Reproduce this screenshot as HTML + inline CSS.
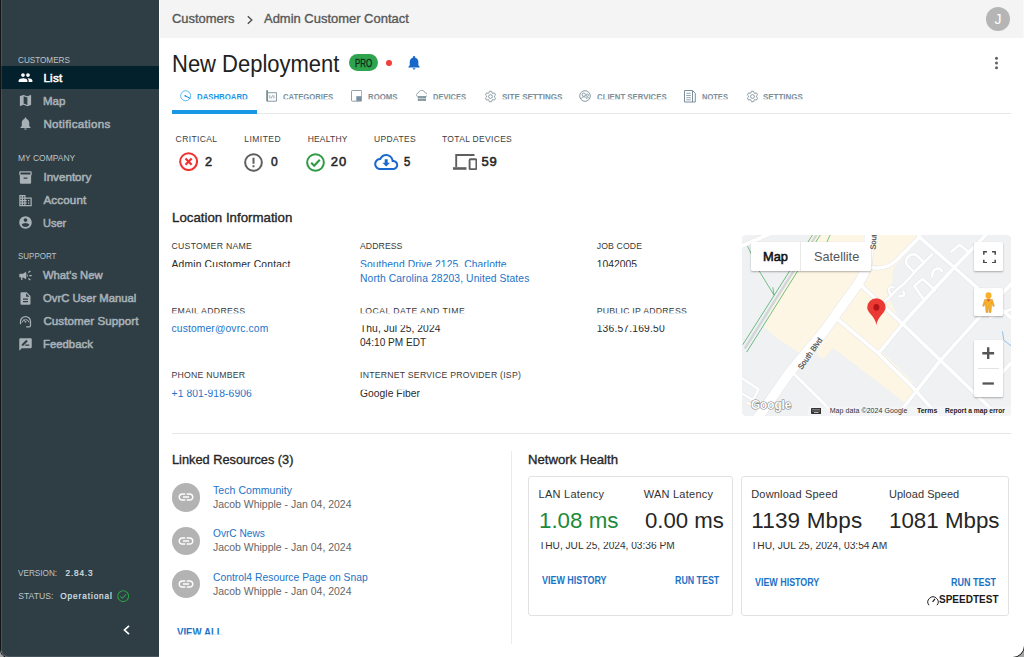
<!DOCTYPE html>
<html lang="en">
<head>
<meta charset="utf-8">
<title>OvrC - New Deployment</title>
<style>
*{box-sizing:border-box;margin:0;padding:0}
html,body{width:1024px;height:657px;overflow:hidden;background:#a2a2a2;font-family:"Liberation Sans",sans-serif;}
#win{position:absolute;left:0;top:-20px;width:1025px;height:678px;background:#fff;border:1px solid #121416;border-radius:9px 9px 12.500px 8px;overflow:hidden;}
#win:after{content:"";position:absolute;left:0;top:0;right:0;bottom:0;border-radius:8px 8px 11.500px 7px;box-shadow:inset 0 0 0 1px rgba(255,255,255,.12);pointer-events:none;}
#pg{position:absolute;left:-1px;top:19px;width:1026px;height:657px;}
.t{position:absolute;white-space:nowrap;line-height:1;transform-origin:0 50%;}
.a{position:absolute}
#side{position:absolute;left:1px;top:0;width:158px;height:657px;background:#2f3d45;}
#sel{position:absolute;left:1px;top:66.200px;width:158px;height:22.500px;background:#03202d;}
#top{position:absolute;left:160px;top:0;width:866px;height:38px;background:#f4f4f4;}
</style>
</head>
<body>
<div id="win"><div id="pg">
<div id="side"></div><div id="sel"></div>
<div class="t" style="left:18.3px;top:54.55px;font-size:9.7px;color:#bcc4c8;transform:scaleX(0.8407);">CUSTOMERS</div>
<div class="t" style="left:43.4px;top:71.90px;font-size:11.6px;color:#ffffff;-webkit-text-stroke:.55px;letter-spacing:0.284px;">List</div>
<div class="t" style="left:43.4px;top:94.70px;font-size:11.6px;color:#a7b1b6;-webkit-text-stroke:.55px;transform:scaleX(0.9928);">Map</div>
<div class="t" style="left:43.4px;top:118.30px;font-size:11.6px;color:#a7b1b6;-webkit-text-stroke:.55px;letter-spacing:0.312px;">Notifications</div>
<div class="t" style="left:18.3px;top:153.25px;font-size:9.7px;color:#bcc4c8;transform:scaleX(0.8758);">MY COMPANY</div>
<div class="t" style="left:43.4px;top:171.10px;font-size:11.6px;color:#a7b1b6;-webkit-text-stroke:.55px;letter-spacing:0.025px;">Inventory</div>
<div class="t" style="left:43.4px;top:194.10px;font-size:11.6px;color:#a7b1b6;-webkit-text-stroke:.55px;letter-spacing:0.166px;">Account</div>
<div class="t" style="left:43.4px;top:216.90px;font-size:11.6px;color:#a7b1b6;-webkit-text-stroke:.55px;transform:scaleX(0.9475);">User</div>
<div class="t" style="left:18.3px;top:251.35px;font-size:9.7px;color:#bcc4c8;transform:scaleX(0.8230);">SUPPORT</div>
<div class="t" style="left:43.4px;top:269.20px;font-size:11.6px;color:#a7b1b6;-webkit-text-stroke:.55px;transform:scaleX(0.9694);">What's New</div>
<div class="t" style="left:43.4px;top:292.20px;font-size:11.6px;color:#a7b1b6;-webkit-text-stroke:.55px;transform:scaleX(0.9719);">OvrC User Manual</div>
<div class="t" style="left:43.4px;top:315.00px;font-size:11.6px;color:#a7b1b6;-webkit-text-stroke:.55px;letter-spacing:0.060px;">Customer Support</div>
<div class="t" style="left:43.4px;top:338.00px;font-size:11.6px;color:#a7b1b6;-webkit-text-stroke:.55px;transform:scaleX(0.9780);">Feedback</div>
<div class="t" style="left:18.2px;top:569.00px;font-size:8.6px;color:#bcc4c8;transform:scaleX(0.9518);">VERSION:</div>
<div class="t" style="left:65.6px;top:569.90px;font-size:8.2px;color:#dde3e6;-webkit-text-stroke:.2px;letter-spacing:0.827px;">2.84.3</div>
<div class="t" style="left:18.2px;top:592.10px;font-size:8.6px;color:#bcc4c8;letter-spacing:0.031px;">STATUS:</div>
<div class="t" style="left:60.3px;top:593.00px;font-size:8.2px;color:#dde3e6;-webkit-text-stroke:.2px;letter-spacing:0.926px;">Operational</div>
<svg class="a" style="left:116.5px;top:589.5px" width="12.4" height="12.4" viewBox="0 0 12 12"><circle cx="6" cy="6" r="5.2" fill="none" stroke="#2ea043" stroke-width="1"/><path d="M3.3 6.2l1.9 1.9 3.6-3.9" fill="none" stroke="#2ea043" stroke-width="1"/></svg>
<svg class="a" style="left:122px;top:625px" width="9" height="10" viewBox="0 0 9 10"><path d="M7 .8L2.5 5 7 9.2" fill="none" stroke="#fff" stroke-width="1.7"/></svg>
<div id="top"></div><div class="a" style="left:1023px;top:0;width:1px;height:38px;background:#f9f9f9"></div>
<div class="t" style="left:171.9px;top:12.30px;font-size:13px;color:#585858;-webkit-text-stroke:.35px;transform:scaleX(0.9943);clip-path:inset(-3px -3px 2.00px -3px);">Customers</div>
<svg class="a" style="left:245.5px;top:14.5px" width="8" height="10" viewBox="0 0 8 10"><path d="M1.8 1.2L5.8 5 1.8 8.8" fill="none" stroke="#505050" stroke-width="1.4"/></svg>
<div class="t" style="left:264px;top:12.30px;font-size:13px;color:#585858;-webkit-text-stroke:.35px;transform:scaleX(0.9970);clip-path:inset(-3px -3px 2.00px -3px);">Admin Customer Contact</div>
<div class="a" style="left:986.100px;top:7.300px;width:24px;height:24px;border-radius:50%;background:#b5b5b5"></div>
<div class="t" style="left:994.5px;top:12.10px;font-size:14px;color:#ffffff;">J</div>
<div class="t" style="left:172.3px;top:52.60px;font-size:23px;color:#212121;transform:scaleX(0.9558);">New Deployment</div>
<div class="a" style="left:348.6px;top:54.1px;width:29.2px;height:17.2px;border-radius:8.6px;background:#2fa44f"></div>
<div class="t" style="left:354.8px;top:59.40px;font-size:10px;color:#0f2e18;-webkit-text-stroke:.35px;transform:scaleX(0.7983);">PRO</div>
<div class="a" style="left:386.1px;top:60.2px;width:5.8px;height:5.8px;border-radius:50%;background:#f33e3a"></div>
<svg class="a" style="left:408px;top:55.8px" width="12.1" height="13.8" viewBox="0 0 14 15.5" preserveAspectRatio="none"><path d="M7 15.2c.9 0 1.6-.7 1.6-1.5H5.4c0 .8.7 1.500 1.6 1.500zM12 10.500V6.800c0-2.400-1.400-4.300-3.600-4.800v-.500C8.400.7 7.800 0 7 0S5.600.7 5.600 1.500V2C3.400 2.500 2 4.400 2 6.800v3.700L.5 12v.8h13V12z" fill="#1667c9"/></svg>
<svg class="a" style="left:994px;top:56.100px" width="5" height="14" viewBox="0 0 5 14"><circle cx="2.5" cy="2.300" r="1.5" fill="#616161"/><circle cx="2.5" cy="7" r="1.5" fill="#616161"/><circle cx="2.5" cy="11.700" r="1.5" fill="#616161"/></svg>
<svg class="a" style="left:17.9px;top:70.00px" width="15" height="15" viewBox="0 0 24 24"><path fill="#ffffff" d="M16 11c1.660 0 2.990-1.340 2.990-3S17.660 5 16 5c-1.660 0-3 1.340-3 3s1.340 3 3 3zm-8 0c1.660 0 2.990-1.340 2.990-3S9.660 5 8 5C6.340 5 5 6.340 5 8s1.340 3 3 3zm0 2c-2.330 0-7 1.170-7 3.500V19h14v-2.500c0-2.330-4.670-3.500-7-3.500zm8 0c-.290 0-.620.020-.970.050 1.160.840 1.970 1.970 1.970 3.450V19h6v-2.500c0-2.330-4.670-3.500-7-3.500z"/></svg>
<svg class="a" style="left:17.9px;top:93.00px" width="15" height="15" viewBox="0 0 24 24"><path fill="#a7b1b6" d="M20.500 3l-.160.030L15 5.100 9 3 3.360 4.900c-.210.070-.360.250-.360.480V20.500c0 .280.220.500.500.500l.160-.030L9 18.900l6 2.100 5.640-1.900c.210-.070.360-.250.360-.480V3.500c0-.280-.220-.500-.500-.500zM15 19l-6-2.110V5l6 2.110V19z"/></svg>
<svg class="a" style="left:17.9px;top:116.30px" width="15" height="15" viewBox="0 0 24 24"><path fill="#a7b1b6" d="M12 22c1.100 0 2-.900 2-2h-4c0 1.100.890 2 2 2zm6-6v-5c0-3.070-1.640-5.640-4.500-6.320V4c0-.830-.670-1.500-1.500-1.500s-1.500.670-1.500 1.500v.680C7.630 5.360 6 7.920 6 11v5l-2 2v1h16v-1l-2-2z"/></svg>
<svg class="a" style="left:17.9px;top:169.50px" width="15" height="15" viewBox="0 0 24 24"><path fill="#a7b1b6" d="M20 2H4c-1 0-2 .900-2 2v3.010c0 .720.430 1.340 1 1.690V20c0 1.100 1.100 2 2 2h14c.900 0 2-.900 2-2V8.700c.570-.350 1-.970 1-1.690V4c0-1.100-1-2-2-2zm-5 12H9v-2h6v2zm5-7H4V4h16v3z"/></svg>
<svg class="a" style="left:17.9px;top:192.50px" width="15" height="15" viewBox="0 0 24 24"><path fill="#a7b1b6" d="M12 7V3H2v18h20V7H12zM6 19H4v-2h2v2zm0-4H4v-2h2v2zm0-4H4V9h2v2zm0-4H4V5h2v2zm4 12H8v-2h2v2zm0-4H8v-2h2v2zm0-4H8V9h2v2zm0-4H8V5h2v2zm10 12h-8v-2h2v-2h-2v-2h2v-2h-2V9h8v10zm-2-8h-2v2h2v-2zm0 4h-2v2h2v-2z"/></svg>
<svg class="a" style="left:17.9px;top:215.30px" width="15" height="15" viewBox="0 0 24 24"><path fill="#a7b1b6" d="M12 2C6.480 2 2 6.480 2 12s4.480 10 10 10 10-4.480 10-10S17.520 2 12 2zm0 3c1.660 0 3 1.340 3 3s-1.340 3-3 3-3-1.340-3-3 1.340-3 3-3zm0 14.200c-2.500 0-4.710-1.280-6-3.220.030-1.990 4-3.080 6-3.080 1.990 0 5.970 1.090 6 3.080-1.290 1.940-3.500 3.220-6 3.220z"/></svg>
<svg class="a" style="left:17.9px;top:267.50px" width="15" height="15" viewBox="0 0 24 24"><path fill="#a7b1b6" d="M18 11v2h4v-2h-4zm-2 6.610c.960.710 2.210 1.650 3.200 2.390.400-.530.800-1.070 1.200-1.600-.990-.740-2.240-1.680-3.200-2.400-.400.540-.800 1.080-1.200 1.610zM20.400 5.600c-.400-.530-.800-1.070-1.200-1.600-.990.740-2.240 1.680-3.200 2.400.400.530.800 1.070 1.200 1.600.960-.720 2.210-1.650 3.200-2.400zM4 9c-1.100 0-2 .900-2 2v2c0 1.100.900 2 2 2h1v4h2v-4h1l5 3V6L8 9H4zm11.500 3c0-1.330-.580-2.530-1.500-3.350v6.690c.920-.810 1.500-2.010 1.500-3.340z"/></svg>
<svg class="a" style="left:17.9px;top:290.50px" width="15" height="15" viewBox="0 0 24 24"><path fill="#a7b1b6" d="M14 2H6c-1.100 0-1.990.900-1.990 2L4 20c0 1.100.890 2 1.990 2H18c1.100 0 2-.900 2-2V8l-6-6zm2 16H8v-2h8v2zm0-4H8v-2h8v2zm-3-5V3.500L18.500 9H13z"/></svg>
<svg class="a" style="left:17.9px;top:313.5px" width="15" height="15" viewBox="0 0 24 24"><path d="M4 16.500V12a8 8 0 0 1 16 0v6.500c0 1.200-.9 2-2 2h-5" fill="none" stroke="#a7b1b6" stroke-width="2"/><path d="M6.500 13.500a5.600 5.600 0 0 1 11 0" fill="none" stroke="#a7b1b6" stroke-width="1.600"/><circle cx="12" cy="12.500" r="1.400" fill="#a7b1b6"/><path d="M12 12.500l-3-3.500" stroke="#a7b1b6" stroke-width="1.400"/></svg>
<svg class="a" style="left:17.9px;top:336.70px" width="15" height="15" viewBox="0 0 24 24"><path fill="#a7b1b6" d="M20 2H4c-1.100 0-1.990.900-1.990 2L2 22l4-4h14c1.100 0 2-.900 2-2V4c0-1.100-.900-2-2-2zM6 14v-2.470l6.880-6.880c.200-.200.510-.200.710 0l1.770 1.770c.200.200.200.510 0 .710L8.470 14H6zm12 0h-7.500l2-2H18v2z"/></svg>
<div class="a" style="left:172px;top:113px;width:838.5px;height:1px;background:#e8e8e8"></div>
<div class="a" style="left:171.7px;top:109.8px;width:85px;height:3.9px;background:#1897e6"></div>
<div class="t" style="left:197.2px;top:92.60px;font-size:9px;color:#1897e6;font-weight:bold;transform:scaleX(0.8667);clip-path:inset(-3px -3px 2.30px -3px);">DASHBOARD</div>
<div class="t" style="left:283px;top:92.60px;font-size:9px;color:#7b8f9a;font-weight:bold;transform:scaleX(0.8531);clip-path:inset(-3px -3px 2.30px -3px);">CATEGORIES</div>
<div class="t" style="left:368.4px;top:92.60px;font-size:9px;color:#7b8f9a;font-weight:bold;transform:scaleX(0.8672);clip-path:inset(-3px -3px 2.30px -3px);">ROOMS</div>
<div class="t" style="left:433.4px;top:92.60px;font-size:9px;color:#7b8f9a;font-weight:bold;transform:scaleX(0.8351);clip-path:inset(-3px -3px 2.30px -3px);">DEVICES</div>
<div class="t" style="left:501.7px;top:92.60px;font-size:9px;color:#7b8f9a;font-weight:bold;transform:scaleX(0.8946);clip-path:inset(-3px -3px 2.30px -3px);">SITE SETTINGS</div>
<div class="t" style="left:597px;top:92.60px;font-size:9px;color:#7b8f9a;font-weight:bold;transform:scaleX(0.8661);clip-path:inset(-3px -3px 2.30px -3px);">CLIENT SERVICES</div>
<div class="t" style="left:702.1px;top:92.60px;font-size:9px;color:#7b8f9a;font-weight:bold;transform:scaleX(0.8351);clip-path:inset(-3px -3px 2.30px -3px);">NOTES</div>
<div class="t" style="left:763.3px;top:92.60px;font-size:9px;color:#7b8f9a;font-weight:bold;transform:scaleX(0.8841);clip-path:inset(-3px -3px 2.30px -3px);">SETTINGS</div>
<svg class="a" style="left:180.1px;top:90.1px" width="11.3" height="11.6" viewBox="0 0 12 12"><circle cx="6" cy="6" r="5.300" fill="none" stroke="#1897e6" stroke-width=".85" opacity=".85"/><path d="M5.200 5.800L11 8.900" stroke="#1897e6" stroke-width="1.100"/><circle cx="5.600" cy="6" r=".9" fill="#1897e6"/></svg>
<svg class="a" style="left:265.8px;top:90px" width="11.2" height="12" viewBox="0 0 11.200 12"><path d="M1 .3v10.900h9.500V2.700H1" fill="none" stroke="#7b8f9a" stroke-width=".9"/><path d="M1.200 .3v10.900" stroke="#7b8f9a" stroke-width="1.700"/><path d="M3.800 5.300v3.200M7.900 5.300v3.200M5.200 8.500l1.400-3.200" stroke="#7b8f9a" stroke-width=".8"/></svg>
<svg class="a" style="left:350.8px;top:90.2px" width="11.4" height="11.8" viewBox="0 0 11.400 11.800"><rect x=".5" y=".5" width="10.300" height="10.700" rx=".8" fill="none" stroke="#7b8f9a" stroke-width=".85"/><rect x="5.300" y="6.200" width="5.300" height="4.700" fill="#7b8f9a"/><path d="M8.700 7.400L7.300 8.500l1.400 1.100" fill="none" stroke="#4da3e6" stroke-width=".8"/></svg>
<svg class="a" style="left:415.7px;top:90.2px" width="11.8" height="11.4" viewBox="0 0 11.800 11.400"><path d="M2.200 6.400C.9 6.400.3 5.600.3 4.800.3 3.900 1.100 3.200 2.200 3.200 2.600 1.600 4 .4 5.700.4 7.500.4 8.800 1.500 9.200 3 10.500 3 11.400 3.800 11.400 4.800 11.400 5.700 10.700 6.400 9.700 6.400" fill="none" stroke="#7b8f9a" stroke-width=".75"/><rect x="1.800" y="6.100" width="8.200" height="2.300" fill="#7b8f9a"/><rect x="1.800" y="8.900" width="8.200" height="2" fill="#7b8f9a"/><path d="M2.800 7.200h6.200M2.800 9.900h6.200" stroke="#fff" stroke-width=".45" stroke-dasharray="1 .6" opacity=".6"/></svg>
<svg class="a" style="left:483.6px;top:89.7px" width="13" height="13" viewBox="0 0 24 24"><path d="M19.140 12.940c.040-.300.060-.610.060-.940 0-.320-.020-.640-.070-.940l2.030-1.580c.180-.140.230-.410.120-.610l-1.920-3.320c-.120-.220-.370-.290-.590-.220l-2.390.960c-.500-.380-1.030-.700-1.620-.940l-.360-2.540c-.040-.240-.240-.410-.480-.410h-3.840c-.240 0-.430.170-.470.410l-.360 2.540c-.590.240-1.130.570-1.620.940l-2.390-.960c-.220-.080-.470 0-.590.220L2.740 8.870c-.120.210-.080.470.120.610l2.030 1.580c-.050.300-.090.630-.090.940s.020.640.070.940l-2.030 1.580c-.180.140-.230.410-.120.610l1.920 3.320c.120.220.370.290.590.220l2.390-.960c.500.380 1.030.700 1.620.940l.360 2.540c.050.240.240.410.480.410h3.840c.240 0 .440-.170.470-.410l.360-2.540c.590-.240 1.130-.560 1.620-.940l2.390.960c.220.080.470 0 .590-.220l1.920-3.320c.120-.220.070-.470-.120-.610l-2.010-1.580z" fill="none" stroke="#7b8f9a" stroke-width="1.600"/><circle cx="12" cy="12" r="3.500" fill="none" stroke="#7b8f9a" stroke-width="1.600"/></svg>
<svg class="a" style="left:579px;top:90.2px" width="12" height="12" viewBox="0 0 12 12"><circle cx="6" cy="6" r="5.300" fill="none" stroke="#7b8f9a" stroke-width=".9"/><circle cx="4.800" cy="4.700" r="1.700" fill="none" stroke="#7b8f9a" stroke-width=".8"/><circle cx="8.300" cy="5.200" r="1.200" fill="none" stroke="#7b8f9a" stroke-width=".8"/><path d="M1.700 9c.8-1.500 2-2.100 3.300-2.100S7.400 7.500 8.200 9M7.500 7.400c1.200-.3 2.300.2 2.900 1.200" fill="none" stroke="#7b8f9a" stroke-width=".8"/></svg>
<svg class="a" style="left:683.6px;top:90px" width="12" height="12.5" viewBox="0 0 12 12.500"><path d="M.5.500h8l2.800 2.800v8.700H.5zM8.500.5v11.500" fill="none" stroke="#7b8f9a" stroke-width="1"/><path d="M2.300 3.300h4.500M2.300 5.500h4.500M2.300 7.700h4.500M2.300 9.800h4.500" stroke="#7b8f9a" stroke-width=".8"/></svg>
<svg class="a" style="left:745.5px;top:89.7px" width="13" height="13" viewBox="0 0 24 24"><path d="M19.140 12.940c.040-.300.060-.610.060-.940 0-.320-.020-.640-.070-.940l2.030-1.580c.180-.140.230-.410.120-.610l-1.920-3.320c-.120-.220-.370-.290-.590-.220l-2.390.960c-.500-.380-1.030-.700-1.620-.940l-.360-2.540c-.040-.240-.240-.410-.480-.410h-3.840c-.240 0-.430.170-.470.410l-.360 2.540c-.590.240-1.130.570-1.620.940l-2.390-.960c-.220-.080-.470 0-.590.220L2.740 8.870c-.120.210-.080.470.120.610l2.030 1.580c-.050.300-.090.630-.090.940s.020.640.070.940l-2.030 1.580c-.180.140-.230.410-.120.610l1.920 3.320c.120.220.370.290.590.220l2.390-.960c.500.380 1.030.700 1.620.940l.360 2.540c.050.240.240.410.480.410h3.840c.240 0 .440-.170.470-.410l.360-2.540c.590-.240 1.130-.560 1.620-.940l2.390.960c.220.080.470 0 .590-.220l1.920-3.320c.120-.220.070-.470-.120-.610l-2.010-1.580z" fill="none" stroke="#7b8f9a" stroke-width="1.600"/><circle cx="12" cy="12" r="3.500" fill="none" stroke="#7b8f9a" stroke-width="1.600"/></svg>
<div class="t" style="left:175.6px;top:134.65px;font-size:8.5px;color:#3d3d3d;letter-spacing:0.395px;">CRITICAL</div>
<div class="t" style="left:244.2px;top:134.65px;font-size:8.5px;color:#3d3d3d;letter-spacing:0.478px;">LIMITED</div>
<div class="t" style="left:307.7px;top:134.65px;font-size:8.5px;color:#3d3d3d;letter-spacing:0.187px;">HEALTHY</div>
<div class="t" style="left:374.1px;top:134.65px;font-size:8.5px;color:#3d3d3d;letter-spacing:0.345px;">UPDATES</div>
<div class="t" style="left:442px;top:134.65px;font-size:8.5px;color:#3d3d3d;letter-spacing:0.318px;">TOTAL DEVICES</div>
<svg class="a" style="left:179px;top:152.3px" width="19.2" height="19.2" viewBox="0 0 20 20"><circle cx="10" cy="10" r="8.800" fill="none" stroke="#f0312f" stroke-width="2.100"/><path d="M6.800 6.800l6.400 6.400M13.200 6.800l-6.400 6.400" stroke="#f0312f" stroke-width="2.300"/></svg>
<div class="t" style="left:205.1px;top:155.30px;font-size:13px;color:#262626;-webkit-text-stroke:.55px;transform:scaleX(0.9814);">2</div>
<svg class="a" style="left:244.2px;top:152.5px" width="19" height="19" viewBox="0 0 20 20"><circle cx="10" cy="10" r="8.800" fill="none" stroke="#5f5f5f" stroke-width="2.100"/><path d="M10 5v6.400M10 13v2" stroke="#5f5f5f" stroke-width="2.100"/></svg>
<div class="t" style="left:270.5px;top:155.30px;font-size:13px;color:#262626;-webkit-text-stroke:.55px;transform:scaleX(0.9261);">0</div>
<svg class="a" style="left:305.9px;top:152.5px" width="19" height="19" viewBox="0 0 20 20"><circle cx="10" cy="10" r="8.800" fill="none" stroke="#2c9b42" stroke-width="2.100"/><path d="M5.500 10.300l3.100 3.100 5.900-6.200" fill="none" stroke="#2c9b42" stroke-width="2.200"/></svg>
<div class="t" style="left:330.8px;top:155.30px;font-size:13px;color:#262626;-webkit-text-stroke:.55px;letter-spacing:1.031px;">20</div>
<svg class="a" style="left:374.3px;top:154.4px" width="24.4" height="16" viewBox="0 0 24 16"><path d="M19.350 6.040A7.490 7.490 0 0 0 12 0C9.110 0 6.600 1.640 5.350 4.040A5.994 5.994 0 0 0 0 10c0 3.310 2.690 6 6 6h13c2.760 0 5-2.240 5-5 0-2.640-2.050-4.780-4.650-4.960zM19 14H6c-2.210 0-4-1.790-4-4s1.790-4 4-4h.710C7.370 3.690 9.480 2 12 2c3.040 0 5.500 2.460 5.500 5.500V8H19c1.660 0 3 1.340 3 3s-1.340 3-3 3z" fill="#1a69cf"/><path d="M10.500 5.200h3v3.600h2.300L12 12.600 8.200 8.800h2.300z" fill="#1a69cf"/></svg>
<div class="t" style="left:404px;top:155.30px;font-size:13px;color:#262626;-webkit-text-stroke:.55px;transform:scaleX(0.8708);">5</div>
<svg class="a" style="left:452.6px;top:154px" width="24.6" height="16.2" viewBox="0 0 24.600 16.200"><path d="M3.200 13V1h18.300" fill="none" stroke="#5f5f5f" stroke-width="1.900"/><rect x="0" y="13.200" width="13.500" height="2.600" fill="#5f5f5f"/><rect x="16.600" y="5.200" width="6.800" height="10" rx="1" fill="none" stroke="#5f5f5f" stroke-width="1.900"/></svg>
<div class="t" style="left:481.5px;top:155.30px;font-size:13px;color:#262626;-webkit-text-stroke:.55px;letter-spacing:0.831px;">59</div>
<div class="t" style="left:172.2px;top:210.75px;font-size:13.3px;color:#262626;-webkit-text-stroke:.35px;transform:scaleX(0.9985);">Location Information</div>
<div class="t" style="left:171.5px;top:241.85px;font-size:8.7px;color:#3a3a3a;letter-spacing:0.268px;">CUSTOMER NAME</div>
<div class="t" style="left:171.5px;top:259.75px;font-size:10.3px;color:#2a2a2a;letter-spacing:0.179px;clip-path:inset(-3px -3px 3.05px -3px);">Admin Customer Contact</div>
<div class="t" style="left:360px;top:241.85px;font-size:8.7px;color:#3a3a3a;letter-spacing:0.067px;">ADDRESS</div>
<div class="t" style="left:360px;top:259.75px;font-size:10.3px;color:#1b73c7;letter-spacing:0.081px;clip-path:inset(-3px -3px 3.05px -3px);">Southend Drive 2125, Charlotte</div>
<div class="t" style="left:360px;top:274.45px;font-size:10.3px;color:#1b73c7;letter-spacing:0.114px;">North Carolina 28203, United States</div>
<div class="t" style="left:596.7px;top:241.85px;font-size:8.7px;color:#3a3a3a;letter-spacing:0.125px;">JOB CODE</div>
<div class="t" style="left:596.7px;top:259.75px;font-size:10.3px;color:#2a2a2a;letter-spacing:0.034px;clip-path:inset(-3px -3px 3.05px -3px);">1042005</div>
<div class="t" style="left:171.5px;top:306.55px;font-size:8.7px;color:#3a3a3a;letter-spacing:0.318px;clip-path:inset(-3px -3px 2.05px -3px);">EMAIL ADDRESS</div>
<div class="t" style="left:171.5px;top:324.25px;font-size:10.3px;color:#1b73c7;letter-spacing:0.134px;clip-path:inset(0.95px -3px -4px -3px);">customer@ovrc.com</div>
<div class="t" style="left:360px;top:306.55px;font-size:8.7px;color:#3a3a3a;letter-spacing:0.462px;clip-path:inset(-3px -3px 2.05px -3px);">LOCAL DATE AND TIME</div>
<div class="t" style="left:360px;top:324.25px;font-size:10.3px;color:#2a2a2a;letter-spacing:0.051px;clip-path:inset(0.95px -3px -4px -3px);">Thu, Jul 25, 2024</div>
<div class="t" style="left:360px;top:338.45px;font-size:10.3px;color:#2a2a2a;transform:scaleX(0.9803);">04:10 PM EDT</div>
<div class="t" style="left:596.7px;top:306.55px;font-size:8.7px;color:#3a3a3a;letter-spacing:0.270px;clip-path:inset(-3px -3px 2.05px -3px);">PUBLIC IP ADDRESS</div>
<div class="t" style="left:596.7px;top:324.25px;font-size:10.3px;color:#2a2a2a;letter-spacing:0.178px;clip-path:inset(0.95px -3px -4px -3px);">136.57.169.50</div>
<div class="t" style="left:171.5px;top:370.85px;font-size:8.7px;color:#3a3a3a;letter-spacing:0.230px;">PHONE NUMBER</div>
<div class="t" style="left:171.5px;top:388.85px;font-size:10.3px;color:#1b73c7;letter-spacing:0.112px;clip-path:inset(0.95px -3px -4px -3px);">+1 801-918-6906</div>
<div class="t" style="left:360px;top:370.85px;font-size:8.7px;color:#3a3a3a;letter-spacing:0.238px;">INTERNET SERVICE PROVIDER (ISP)</div>
<div class="t" style="left:360px;top:388.85px;font-size:10.3px;color:#2a2a2a;letter-spacing:0.043px;clip-path:inset(0.95px -3px -4px -3px);">Google Fiber</div>
<div class="a" style="left:172px;top:432.5px;width:838.5px;height:1px;background:#e6e6e6"></div>
<div class="t" style="left:172px;top:452.95px;font-size:13.3px;color:#262626;-webkit-text-stroke:.35px;transform:scaleX(0.9613);">Linked Resources (3)</div>
<div class="a" style="left:171.500px;top:482.8px;width:28.800px;height:28.800px;border-radius:50%;background:#b3b3b3"></div>
<svg class="a" style="left:176.9px;top:488.20000000000005px" width="18" height="18" viewBox="0 0 24 24"><path d="M3.900 12c0-1.710 1.390-3.100 3.100-3.100h4V7H7c-2.760 0-5 2.240-5 5s2.240 5 5 5h4v-1.900H7c-1.710 0-3.100-1.390-3.100-3.100zM8 13h8v-2H8v2zm9-6h-4v1.900h4c1.710 0 3.100 1.390 3.100 3.100s-1.390 3.100-3.100 3.100h-4V17h4c2.760 0 5-2.240 5-5s-2.240-5-5-5z" fill="#fff"/></svg>
<div class="t" style="left:213px;top:484.95px;font-size:10.5px;color:#1b73c7;letter-spacing:0.061px;">Tech Community</div>
<div class="t" style="left:213.3px;top:499.15px;font-size:10.5px;color:#666;transform:scaleX(0.9970);">Jacob Whipple - Jan 04, 2024</div>
<div class="a" style="left:171.500px;top:526.6px;width:28.800px;height:28.800px;border-radius:50%;background:#b3b3b3"></div>
<svg class="a" style="left:176.9px;top:532.0px" width="18" height="18" viewBox="0 0 24 24"><path d="M3.900 12c0-1.710 1.390-3.100 3.100-3.100h4V7H7c-2.760 0-5 2.240-5 5s2.240 5 5 5h4v-1.900H7c-1.710 0-3.100-1.390-3.100-3.100zM8 13h8v-2H8v2zm9-6h-4v1.900h4c1.710 0 3.100 1.390 3.100 3.100s-1.390 3.100-3.100 3.100h-4V17h4c2.760 0 5-2.240 5-5s-2.240-5-5-5z" fill="#fff"/></svg>
<div class="t" style="left:213px;top:528.15px;font-size:10.5px;color:#1b73c7;transform:scaleX(0.9651);">OvrC News</div>
<div class="t" style="left:213.3px;top:542.35px;font-size:10.5px;color:#666;transform:scaleX(0.9970);">Jacob Whipple - Jan 04, 2024</div>
<div class="a" style="left:171.500px;top:569.5px;width:28.800px;height:28.800px;border-radius:50%;background:#b3b3b3"></div>
<svg class="a" style="left:176.9px;top:574.9px" width="18" height="18" viewBox="0 0 24 24"><path d="M3.900 12c0-1.710 1.390-3.100 3.100-3.100h4V7H7c-2.760 0-5 2.240-5 5s2.240 5 5 5h4v-1.900H7c-1.710 0-3.100-1.390-3.100-3.100zM8 13h8v-2H8v2zm9-6h-4v1.900h4c1.710 0 3.100 1.390 3.100 3.100s-1.390 3.100-3.100 3.100h-4V17h4c2.760 0 5-2.240 5-5s-2.240-5-5-5z" fill="#fff"/></svg>
<div class="t" style="left:213px;top:571.65px;font-size:10.5px;color:#1b73c7;transform:scaleX(0.9858);">Control4 Resource Page on Snap</div>
<div class="t" style="left:213.3px;top:585.85px;font-size:10.5px;color:#666;transform:scaleX(0.9970);">Jacob Whipple - Jan 04, 2024</div>
<div class="t" style="left:176.9px;top:626.70px;font-size:10.6px;color:#1b73c7;font-weight:bold;transform:scaleX(0.9100);clip-path:inset(-3px -3px 2.70px -3px);">VIEW ALL</div>
<div class="a" style="left:511px;top:450.500px;width:1px;height:193.500px;background:#ebebeb"></div>
<div class="t" style="left:528px;top:452.95px;font-size:13.3px;color:#262626;-webkit-text-stroke:.35px;transform:scaleX(0.9900);">Network Health</div>
<div class="a" style="left:527.900px;top:476.200px;width:205px;height:139.400px;border:1px solid #e2e2e2;border-radius:3px"></div>
<div class="a" style="left:741.200px;top:476.200px;width:268px;height:139.400px;border:1px solid #e2e2e2;border-radius:3px"></div>
<div class="t" style="left:538.6px;top:488.80px;font-size:11px;color:#333;letter-spacing:0.242px;">LAN Latency</div>
<div class="t" style="left:643.7px;top:488.80px;font-size:11px;color:#333;letter-spacing:0.246px;">WAN Latency</div>
<div class="t" style="left:538.6px;top:509.95px;font-size:22.5px;color:#1c8a3a;transform:scaleX(0.9919);">1.08 ms</div>
<div class="t" style="left:644.7px;top:509.95px;font-size:22.5px;color:#262626;transform:scaleX(0.9857);">0.00 ms</div>
<div class="t" style="left:538.6px;top:539.85px;font-size:10.5px;color:#333;transform:scaleX(0.9675);clip-path:inset(2.05px -3px -4px -3px);">THU, JUL 25, 2024, 03:36 PM</div>
<div class="t" style="left:542px;top:575.60px;font-size:10px;color:#1b73c7;font-weight:bold;transform:scaleX(0.8929);">VIEW HISTORY</div>
<div class="t" style="left:674.8px;top:575.60px;font-size:10px;color:#1b73c7;font-weight:bold;transform:scaleX(0.8840);">RUN TEST</div>
<div class="t" style="left:751.2px;top:488.80px;font-size:11px;color:#333;letter-spacing:0.200px;">Download Speed</div>
<div class="t" style="left:888.9px;top:488.80px;font-size:11px;color:#333;letter-spacing:0.051px;">Upload Speed</div>
<div class="t" style="left:751.2px;top:509.95px;font-size:22.5px;color:#262626;letter-spacing:0.168px;">1139 Mbps</div>
<div class="t" style="left:888.9px;top:509.95px;font-size:22.5px;color:#262626;transform:scaleX(0.9926);">1081 Mbps</div>
<div class="t" style="left:751.2px;top:539.85px;font-size:10.5px;color:#333;transform:scaleX(0.9750);clip-path:inset(2.05px -3px -4px -3px);">THU, JUL 25, 2024, 03:54 AM</div>
<div class="t" style="left:754.7px;top:578.10px;font-size:10px;color:#1b73c7;font-weight:bold;transform:scaleX(0.8902);">VIEW HISTORY</div>
<div class="t" style="left:951px;top:578.10px;font-size:10px;color:#1b73c7;font-weight:bold;transform:scaleX(0.9000);">RUN TEST</div>
<div class="t" style="left:939.4px;top:594.05px;font-size:10.5px;color:#1a1a1a;font-weight:bold;transform:scaleX(0.9530);">SPEEDTEST</div>
<svg class="a" style="left:927px;top:594.5px" width="12" height="11" viewBox="0 0 12 11"><path d="M2 10.200A5.100 5.100 0 1 1 10 10.200" fill="none" stroke="#1a1a1a" stroke-width="1"/><path d="M5.600 6.800L8 3.800" stroke="#1a1a1a" stroke-width="1.200"/></svg>
<div class="a" id="map" style="left:742.300px;top:235.300px;width:269px;height:180.500px;border-radius:4.500px;overflow:hidden;background:#eff1f3"><svg class="a" style="left:0;top:0" width="269" height="181" viewBox="0 0 976 657" preserveAspectRatio="none">
<rect width="976" height="657" fill="#eff1f3"/>
<path d="M255 0H645L640 22 548 122 545 178 522 206 578 322 502 418 618 532 628 566 602 618 556 582 330 410 296 448 279 443 268 416 210 430 168 400 125 374 80 332 112 250z" fill="#fef6e4"/>
<g fill="none" stroke="#e1e3e7" stroke-linecap="round" stroke-linejoin="round"><path d="M-10 44L100 -4" stroke-width="17.2"/><path d="M470 118C520 126 545 110 580 72L645 6" stroke-width="16.2"/><path d="M640 4L770 118 850 188 976 300" stroke-width="16.2"/><path d="M436 186L585 325 720 455 860 590 940 665" stroke-width="16.2"/><path d="M350 308L495 430 612 545 720 665" stroke-width="16.2"/><path d="M186 502L300 615 345 665" stroke-width="14.2"/><path d="M495 430L601 302 770 118 890 -6" stroke-width="16.2"/><path d="M575 640L720 455 860 300 985 170" stroke-width="16.2"/><path d="M860 590L985 455" stroke-width="16.2"/><path d="M900 300L976 270" stroke-width="13.2"/><path d="M520 240L560 200 590 175 640 120 690 70" stroke-width="12.7"/><path d="M600 110C585 90 610 60 635 75L660 100 625 135z" stroke-width="12.7"/><path d="M625 185L655 160 700 200 660 235z" stroke-width="12.7"/><path d="M690 150C690 120 715 115 725 130" stroke-width="12.7"/><path d="M760 60L790 35 820 60" stroke-width="12.7"/><path d="M540 215C525 200 535 185 550 190M585 205C595 215 585 225 570 222" stroke-width="11.7"/><path d="M0 520L60 560 40 600 0 575M20 610L80 640" stroke-width="11.7"/><path d="M38 692L66 651 172 500 301 345 425 172C452 130 460 100 462 -5" stroke-width="38.2"/></g><g fill="none" stroke="#fff" stroke-linecap="round" stroke-linejoin="round"><path d="M-10 44L100 -4" stroke-width="14"/><path d="M470 118C520 126 545 110 580 72L645 6" stroke-width="13"/><path d="M640 4L770 118 850 188 976 300" stroke-width="13"/><path d="M436 186L585 325 720 455 860 590 940 665" stroke-width="13"/><path d="M350 308L495 430 612 545 720 665" stroke-width="13"/><path d="M186 502L300 615 345 665" stroke-width="11"/><path d="M495 430L601 302 770 118 890 -6" stroke-width="13"/><path d="M575 640L720 455 860 300 985 170" stroke-width="13"/><path d="M860 590L985 455" stroke-width="13"/><path d="M900 300L976 270" stroke-width="10"/><path d="M520 240L560 200 590 175 640 120 690 70" stroke-width="9.5"/><path d="M600 110C585 90 610 60 635 75L660 100 625 135z" stroke-width="9.5"/><path d="M625 185L655 160 700 200 660 235z" stroke-width="9.5"/><path d="M690 150C690 120 715 115 725 130" stroke-width="9.5"/><path d="M760 60L790 35 820 60" stroke-width="9.5"/><path d="M540 215C525 200 535 185 550 190M585 205C595 215 585 225 570 222" stroke-width="8.5"/><path d="M0 520L60 560 40 600 0 575M20 610L80 640" stroke-width="8.5"/><path d="M38 692L66 651 172 500 301 345 425 172C452 130 460 100 462 -5" stroke-width="35"/></g>
<path d="M273 -5L10 412" fill="none" stroke="#d3d6d9" stroke-width="9"/>
<path d="M259 -5L3 398M287 -5L17 425" fill="none" stroke="#35a552" stroke-width="2.600"/>
<path d="M322 -5L297 50M20 40L62 130 116 218 112 190" fill="none" stroke="#35a552" stroke-width="2.400"/>
<path d="M945 350L950 382 976 402" fill="none" stroke="#6aa9e8" stroke-width="2.500"/>
</svg></div>
<div class="a" style="left:750.800px;top:242.300px;width:120.300px;height:28.700px;background:#fff;border-radius:1.500px;box-shadow:0 1px 2px rgba(0,0,0,.3);"></div>
<div class="a" style="left:800px;top:242.300px;width:1px;height:28.700px;background:#e9e9e9"></div>
<div class="t" style="left:763px;top:250.10px;font-size:13px;color:#111;-webkit-text-stroke:.55px;transform:scaleX(0.9883);">Map</div>
<div class="t" style="left:813.6px;top:250.10px;font-size:13px;color:#565656;transform:scaleX(0.9773);">Satellite</div>
<div class="a" style="left:974px;top:242.300px;width:28.700px;height:28.700px;background:#fff;border-radius:1.500px;box-shadow:0 1px 2px rgba(0,0,0,.3);"></div>
<svg class="a" style="left:982.9px;top:250.8px" width="13" height="12.6" viewBox="0 0 13 12.600"><path d="M.8 3.800V.8H4M9 .8h3.200v3M12.200 8.800v3H9M4 11.800H.8v-3" fill="none" stroke="#4a4a4a" stroke-width="1.500"/></svg>
<div class="a" style="left:974px;top:287.500px;width:28.700px;height:28.400px;background:#fff;border-radius:1.500px;box-shadow:0 1px 2px rgba(0,0,0,.3);"></div>
<svg class="a" style="left:982px;top:291.5px" width="13" height="21" viewBox="0 0 13 21"><ellipse cx="6.500" cy="3.600" rx="3" ry="3.400" fill="#f6b02c"/><path d="M2.600 7.500h7.800l2 6.500-1.400.4-1.500-3.800v3.400l-.5 6.500H7.100l-.4-5.500h-.400l-.4 5.500H4l-.5-6.500v-3.400L2 14.400.6 14z" fill="#f6b02c" stroke="#c98315" stroke-width=".4"/><path d="M4.500 7.600l2 2 2-2z" fill="#e8453c"/></svg>
<div class="a" style="left:974px;top:339.700px;width:28.700px;height:57.500px;background:#fff;border-radius:1.500px;box-shadow:0 1px 2px rgba(0,0,0,.3);"></div>
<div class="a" style="left:977.500px;top:368.200px;width:21.500px;height:1px;background:#e3e3e3"></div>
<svg class="a" style="left:982.3px;top:347.3px" width="12.4" height="12.4" viewBox="0 0 12 12"><path d="M6 .3v11.400M.3 6h11.400" stroke="#555" stroke-width="2.300"/></svg>
<svg class="a" style="left:982.3px;top:381.8px" width="12.4" height="3" viewBox="0 0 12 3"><path d="M.3 1.500h11.400" stroke="#555" stroke-width="2.300"/></svg>
<svg class="a" style="left:867.4px;top:297.8px" width="18.8" height="27.4" viewBox="0 0 19 27.400"><path d="M9.500 27.200C9 23 6.800 20 4.200 16.800 1.600 13.600.2 11.800.2 9.400A9.300 9.300 0 0 1 18.800 9.400c0 2.400-1.400 4.200-4 7.400C12.200 20 10 23 9.500 27.200z" fill="#ea3a33"/><ellipse cx="9.500" cy="9.300" rx="3" ry="3.400" fill="#b3141a"/></svg>
<div class="t" style="left:791.500px;top:349.800px;font-size:7.600px;color:#4a4a4a;transform:rotate(-55deg);transform-origin:50% 50%;text-shadow:0 0 1.500px #fff,0 0 1.500px #fff;-webkit-text-stroke:.2px">South Blvd</div>
<div class="a" style="left:862px;top:235.300px;width:20px;height:24px;overflow:hidden"><div class="t" style="left:1.500px;top:1px;font-size:7.600px;color:#4a4a4a;transform:rotate(-86deg);transform-origin:50% 50%;text-shadow:0 0 1.500px #fff;-webkit-text-stroke:.2px">South</div></div>
<div class="a" style="left:808px;top:405.800px;width:203.300px;height:10px;background:rgba(245,245,245,.55)"></div>
<div class="t" style="left:750.5px;top:397.55px;font-size:13.5px;color:#fff;font-weight:bold;transform:scaleX(0.8667);-webkit-text-stroke:1.100px #7a7a7a;paint-order:stroke fill;">Google</div>
<svg class="a" style="left:810.9px;top:407.5px" width="10.5" height="6" viewBox="0 0 21 12"><rect width="21" height="12" rx="1.500" fill="#333"/><path d="M3 3h2M7 3h2M11 3h2M15 3h2M3 6h2M7 6h2M11 6h2M15 6h2M6 9h9" stroke="#fff" stroke-width="1.300"/></svg>
<div class="t" style="left:829.7px;top:407.30px;font-size:7px;color:#333;letter-spacing:0.065px;">Map data ©2024 Google</div>
<div class="t" style="left:916.5px;top:407.30px;font-size:7px;color:#222;font-weight:bold;transform:scaleX(0.9951);">Terms</div>
<div class="t" style="left:945.4px;top:407.30px;font-size:7px;color:#222;font-weight:bold;transform:scaleX(0.9487);">Report a map error</div>
</div></div>
</body>
</html>
